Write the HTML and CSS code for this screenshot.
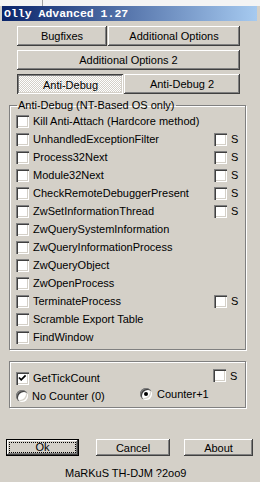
FILE: index.html
```html
<!DOCTYPE html>
<html lang="en">

<head>
    <meta charset="UTF-8">
    <title>Olly Advanced 1.27</title>
    <link rel="stylesheet" href="styles.css">
</head>

<body>
    <div class="topstrip"><span class="edge"></span></div>
    <div class="caption">Olly Advanced 1.27</div>

    <div class="buttons">
        <div class="line">
            <button class="btn w-bug">Bugfixes</button>
            <button class="btn w-add">Additional Options</button>
        </div>
        <div class="line">
            <button class="btn w-full">Additional Options 2</button>
        </div>
        <div class="line tabs">
            <button class="btn tab active">Anti-Debug</button>
            <button class="btn tab w-tab2">Anti-Debug 2</button>
        </div>
    </div>

    <fieldset class="group">
        <legend>Anti-Debug (NT-Based OS only)</legend>
        <div class="opt"><span class="chk"></span><span class="lbl">Kill Anti-Attach (Hardcore method)</span></div>
        <div class="opt"><span class="chk"></span><span class="lbl">UnhandledExceptionFilter</span><span class="s"><span class="chk"></span>S</span></div>
        <div class="opt"><span class="chk"></span><span class="lbl">Process32Next</span><span class="s"><span class="chk"></span>S</span></div>
        <div class="opt"><span class="chk"></span><span class="lbl">Module32Next</span><span class="s"><span class="chk"></span>S</span></div>
        <div class="opt"><span class="chk"></span><span class="lbl">CheckRemoteDebuggerPresent</span><span class="s"><span class="chk"></span>S</span></div>
        <div class="opt"><span class="chk"></span><span class="lbl">ZwSetInformationThread</span><span class="s"><span class="chk"></span>S</span></div>
        <div class="opt"><span class="chk"></span><span class="lbl">ZwQuerySystemInformation</span></div>
        <div class="opt"><span class="chk"></span><span class="lbl">ZwQueryInformationProcess</span></div>
        <div class="opt"><span class="chk"></span><span class="lbl">ZwQueryObject</span></div>
        <div class="opt"><span class="chk"></span><span class="lbl">ZwOpenProcess</span></div>
        <div class="opt"><span class="chk"></span><span class="lbl">TerminateProcess</span><span class="s"><span class="chk"></span>S</span></div>
        <div class="opt"><span class="chk"></span><span class="lbl">Scramble Export Table</span></div>
        <div class="opt"><span class="chk"></span><span class="lbl">FindWindow</span></div>
    </fieldset>

    <div class="group2">
        <div class="opt">
            <span class="chk checked">
                <svg width="13" height="13" viewBox="0 0 13 13"><polyline points="3,5.5 5.2,7.8 9.6,3.4" fill="none" stroke="#000" stroke-width="1.7"/></svg>
            </span>
            <span class="lbl">GetTickCount</span>
            <span class="s up"><span class="chk"></span>S</span>
        </div>
        <div class="opt">
            <span class="radio"></span><span class="lbl">No Counter (0)</span>
            <span class="r2"><span class="radio on"></span>Counter+1</span>
        </div>
    </div>

    <div class="bottom">
        <button class="btn def w-ok"><span class="focus">Ok</span></button>
        <button class="btn w-cancel">Cancel</button>
        <button class="btn w-about">About</button>
    </div>

    <p class="credit">MaRKuS TH-DJM ?2oo9</p>
</body>

</html>
```

FILE: styles.css
```css
* {
    margin: 0;
    padding: 0;
    box-sizing: border-box;
}

body {
    width: 260px;
    height: 482px;
    overflow: hidden;
    font-family: "Liberation Sans", Arial, sans-serif;
    font-size: 11px;
    color: #000;
    background-color: #d4d0c8;
}

.topstrip {
    height: 6px;
    background-color: #f4f4f4;
}

.topstrip .edge {
    display: block;
    margin-left: 42px;
    width: 1px;
    height: 6px;
    background-color: #a0a0a0;
}

.caption {
    height: 15px;
    margin: 0 3px 0 2px;
    padding-left: 2px;
    font-family: "Liberation Mono", "Courier New", monospace;
    font-weight: bold;
    font-size: 11.5px;
    line-height: 15px;
    color: #fff;
    background: linear-gradient(to right, #0a246a, #a6caf0);
}

/* buttons */
.buttons {
    margin-top: 5px;
    padding-left: 17px;
}

.line {
    display: flex;
    gap: 1px;
    height: 20px;
    margin-bottom: 4px;
}

.btn {
    font-family: inherit;
    font-size: 11px;
    color: #000;
    border: 0;
    background-color: #d4d0c8;
    box-shadow: inset -1px -1px #404040, inset 1px 1px #fff, inset -2px -2px #808080, inset 2px 2px #d4d0c8;
}

.w-bug { width: 90px; }
.w-add { width: 132px; }
.w-full { width: 223px; }

.tab { width: 106px; }
.w-tab2 { width: 116px; }

.tab.active {
    padding: 1px 0 0 1px;
    background: repeating-conic-gradient(#fff 0 25%, #d4d0c8 0 50%) 0 0 / 2px 2px;
    box-shadow: inset 1px 1px #404040, inset -1px -1px #fff, inset 2px 2px #808080, inset -2px -2px #d4d0c8;
}

/* groups */
.group {
    margin: 2px 0 0 9px;
    width: 237px;
    padding: 0 0 3px 6px;
    border: 1px solid #808080;
    box-shadow: inset 1px 1px #fff, 1px 1px #fff;
}

.group legend {
    margin-left: 1px;
    padding: 0 1px;
    line-height: 14px;
}

.opt {
    display: flex;
    align-items: center;
    height: 18px;
}

.chk {
    flex: none;
    display: inline-block;
    width: 13px;
    height: 13px;
    background-color: #fff;
    box-shadow: inset 1px 1px #808080, inset 2px 2px #404040, inset -1px -1px #fff, inset -2px -2px #d4d0c8;
}

.chk svg {
    display: block;
}

.lbl {
    margin-left: 4px;
}

.s {
    display: flex;
    align-items: center;
    gap: 4px;
    margin-left: auto;
    width: 31px;
}

.group2 {
    margin: 11px 0 0 9px;
    width: 237px;
    height: 47px;
    padding: 7px 0 0 7px;
    border: 1px solid #808080;
    box-shadow: inset 1px 1px #fff, 1px 1px #fff;
}

.group2 .opt .chk,
.group2 .opt .radio {
    margin-left: -1px;
}

.s.up {
    align-self: flex-start;
}

.radio {
    flex: none;
    display: inline-flex;
    align-items: center;
    justify-content: center;
    width: 12px;
    height: 12px;
    border-radius: 50%;
    background-color: #fff;
    box-shadow: inset 1px 1px #808080, inset 2px 2px #404040, inset -1px -1px #fff, inset -2px -2px #d4d0c8;
}

.radio.on::after {
    content: "";
    width: 4px;
    height: 4px;
    border-radius: 50%;
    background-color: #000;
}

.r2 {
    display: flex;
    align-items: center;
    gap: 5px;
    align-self: flex-start;
    margin-top: 1px;
    margin-left: auto;
    width: 104px;
}

/* bottom bar */
.bottom {
    display: flex;
    margin-top: 31px;
    padding-left: 6px;
    height: 17px;
}

.w-ok { width: 73px; }
.w-cancel { width: 74px; margin-left: 17px; }
.w-about { width: 69px; margin-left: 14px; }

.btn.def {
    padding: 3px;
    box-shadow: inset 0 0 0 1px #000, inset -2px -2px #404040, inset 2px 2px #fff, inset -3px -3px #808080;
}

.focus {
    display: block;
    height: 100%;
    line-height: 9px;
    border: 1px dotted #000;
}

.credit {
    margin-top: 10px;
    padding-left: 65px;
    line-height: 14px;
}
```
